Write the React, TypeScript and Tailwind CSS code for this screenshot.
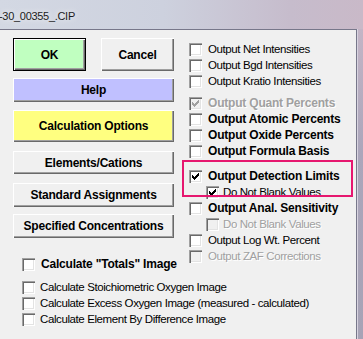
import React from 'react'

type BoxProps = { checked?: boolean; disabled?: boolean }

function CheckBox({ checked, disabled }: BoxProps) {
  const cols = [2, 3, 4, 3, 2, 1, 0]
  return (
    <div
      className={`relative w-[13px] h-[13px] shrink-0 ${disabled ? 'bg-[#f0f0f0]' : 'bg-white'} shadow-[inset_1px_1px_0_#a0a0a0,inset_2px_2px_0_#696969,inset_-1px_-1px_0_#ffffff,inset_-2px_-2px_0_#e3e3e3]`}
    >
      {checked && (
        <svg width="7" height="7" viewBox="0 0 7 7" className="absolute left-[3px] top-[3px]" shapeRendering="crispEdges">
          {cols.map((y, x) => (
            <rect key={x} x={x} y={y} width="1" height="3" fill={disabled ? '#a0a0a0' : '#000'} />
          ))}
        </svg>
      )}
    </div>
  )
}

type RowProps = {
  label: string
  checked?: boolean
  disabled?: boolean
  bold?: boolean
  gap?: string
  className?: string
}

function Row({ label, checked, disabled, bold, gap = 'gap-[6px]', className = '' }: RowProps) {
  const text = bold
    ? 'text-[12px] font-bold tracking-[-0.2px]'
    : 'text-[11.5px] tracking-[-0.4px]'
  const color = disabled ? 'text-[#a0a0a0] [text-shadow:1px_1px_0_#ffffff]' : 'text-black'
  return (
    <div className={`flex items-center h-[16px] ${gap} ${className}`}>
      <CheckBox checked={checked} disabled={disabled} />
      <span className={`leading-[16px] whitespace-nowrap ${text} ${color}`}>{label}</span>
    </div>
  )
}

const raised =
  'shadow-[inset_1px_1px_0_#ffffff,inset_-1px_-1px_0_#696969,inset_-2px_-2px_0_#a0a0a0]'

function Btn({ label, bg = 'bg-[#f0f0f0]', className = '' }: { label: string; bg?: string; className?: string }) {
  return (
    <div
      className={`flex items-center justify-center text-[12px] font-bold tracking-[-0.2px] text-black ${bg} ${raised} ${className}`}
    >
      {label}
    </div>
  )
}

export default function App() {
  return (
    <div className="relative w-[363px] h-[339px] overflow-hidden flex flex-col font-['Liberation_Sans',Arial,sans-serif] bg-[#f0f0f0]">
      {/* title bar */}
      <div className="h-[29px] shrink-0 flex items-center bg-[linear-gradient(to_right,#d3d8e3_0%,#cdd1de_45%,#c6bccc_80%,#c9b9c8_100%)]">
        <span className="text-[11px] tracking-[-0.3px] text-[#1c1c1c] ml-[-1px] mt-[4px] [text-shadow:0_0_6px_#ffffff]">
          -30_00355_.CIP
        </span>
      </div>

      <div className="flex flex-1">
        <div className="flex-1 flex flex-col border-t border-r border-[#77778a] bg-[#f0f0f0]">
          {/* upper area */}
          <div className="flex">
            {/* left buttons */}
            <div className="w-[161px] ml-[13px] mt-[8px] flex flex-col">
              <div className="flex gap-[15px]">
                <div className="w-[73px] h-[33px] border border-black bg-[#c0ffc0] flex">
                  <Btn label="OK" bg="bg-[#c0ffc0]" className="flex-1" />
                </div>
                <Btn label="Cancel" className="w-[73px] h-[33px]" />
              </div>
              <Btn label="Help" bg="bg-[#c0c0ff]" className="mt-[7px] h-[24px]" />
              <Btn label="Calculation Options" bg="bg-[#ffff80]" className="mt-[8px] h-[32px]" />
              <Btn label="Elements/Cations" className="mt-[9px] h-[23px]" />
              <Btn label="Standard Assignments" className="mt-[9px] h-[24px]" />
              <Btn label="Specified Concentrations" className="mt-[7px] h-[24px]" />
              <Row label={'Calculate "Totals" Image'} bold className="mt-[18px] ml-[9px]" />
            </div>

            {/* right options */}
            <div className="ml-[15px] mt-[11px] flex flex-col">
              <Row label="Output Net Intensities" />
              <Row label="Output Bgd Intensities" />
              <Row label="Output Kratio Intensities" />
              <Row label="Output Quant Percents" bold checked disabled className="mt-[6px]" />
              <Row label="Output Atomic Percents" bold />
              <Row label="Output Oxide Percents" bold />
              <Row label="Output Formula Basis" bold />
              <Row label="Output Detection Limits" bold checked className="mt-[9px]" />
              <Row label="Do Not Blank Values" checked gap="gap-[4px]" className="ml-[17px]" />
              <Row label="Output Anal. Sensitivity" bold />
              <Row label="Do Not Blank Values" disabled gap="gap-[4px]" className="ml-[17px]" />
              <Row label="Output Log Wt. Percent" />
              <Row label="Output ZAF Corrections" disabled />
            </div>
          </div>

          {/* lower options */}
          <div className="ml-[22px] mt-[7px] flex flex-col">
            <Row label="Calculate Stoichiometric Oxygen Image" gap="gap-[5px]" />
            <Row label="Calculate Excess Oxygen Image (measured - calculated)" gap="gap-[5px]" />
            <Row label="Calculate Element By Difference Image" gap="gap-[5px]" />
          </div>
        </div>
        {/* window frame */}
        <div className="w-[6px] bg-[linear-gradient(to_bottom,#c3b5c6,#aba6bb_40%,#a7a3b6)] border-l border-[#d8d4e0]" />
      </div>

      {/* highlight annotation */}
      <div className="absolute left-[182px] top-[160px] w-[171px] h-[37px] border-2 border-[#e6176f]" />
    </div>
  )
}
